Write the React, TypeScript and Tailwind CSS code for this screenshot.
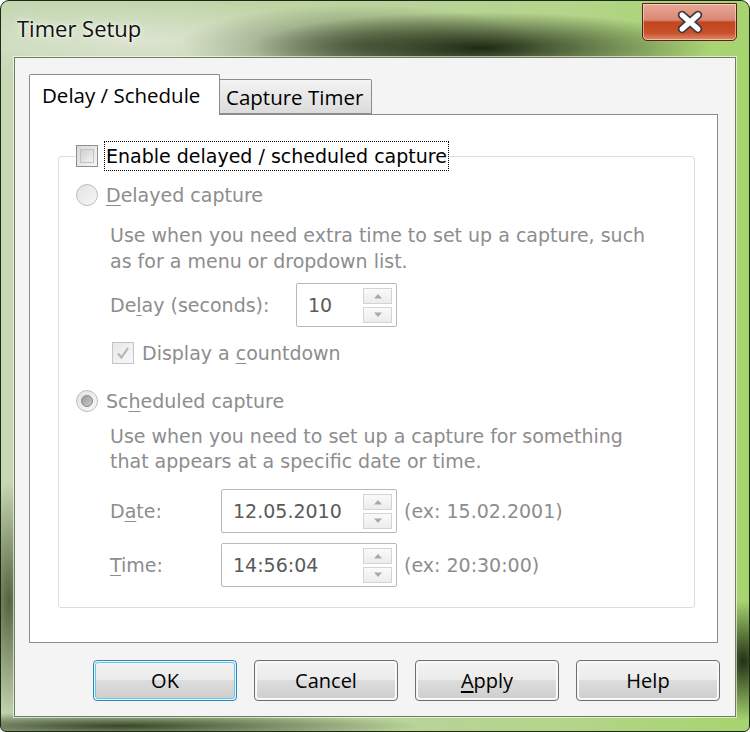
import React from "react";

const ui = "font-['DejaVu_Sans',sans-serif]";
const seg = "font-['Open_Sans',sans-serif]";

function SpinButtons() {
  return (
    <div className="flex flex-col gap-[3px] mr-[4px]">
      {[0, 1].map((i) => (
        <div
          key={i}
          className="w-[29px] h-[16px] border border-[#d4d4d4] bg-gradient-to-b from-[#fafafa] to-[#ececec] flex items-center justify-center"
        >
          <svg width="10" height="6" viewBox="0 0 10 6">
            {i === 0 ? (
              <path d="M1 5.5 L5 1 L9 5.5 Z" fill="#a9a9a9" />
            ) : (
              <path d="M1 0.5 L5 5 L9 0.5 Z" fill="#a9a9a9" />
            )}
          </svg>
        </div>
      ))}
    </div>
  );
}

function SpinBox({ value, width }: { value: string; width: string }) {
  return (
    <div
      className={`${width} h-[44px] border border-[#b8b8b8] rounded-[2px] bg-white flex items-center justify-between`}
    >
      <span className={`pl-[11px] text-[19px] text-[#5a5a5a] ${ui}`}>{value}</span>
      <SpinButtons />
    </div>
  );
}

function Radio({ checked }: { checked?: boolean }) {
  return (
    <div className="w-[22px] h-[22px] rounded-full border border-[#bdbdbd] bg-gradient-to-br from-[#e2e2e2] to-[#f8f8f8] flex items-center justify-center shrink-0">
      {checked && (
        <div className="w-[12px] h-[12px] rounded-full bg-gradient-to-br from-[#9a9a9a] to-[#c8c8c8] border border-[#8a8a8a]" />
      )}
    </div>
  );
}

function Btn({ label, def, u }: { label: string; def?: boolean; u?: boolean }) {
  return (
    <div
      className={`w-[144px] h-[41px] rounded-[4px] border ${
        def ? "border-[#3c7fb1]" : "border-[#707070]"
      } p-[1px]`}
    >
      <div
        className={`w-full h-full rounded-[3px] border ${
          def ? "border-[#4fd0f8]" : "border-[#fbfbfb]"
        } bg-[linear-gradient(180deg,#f2f2f2_0%,#ebebeb_49%,#dddddd_50%,#cfcfcf_100%)] flex items-center justify-center text-[20px] text-black ${seg}`}
      >
        {u ? (
          <span>
            <span className="underline underline-offset-[3px]">{label[0]}</span>
            {label.slice(1)}
          </span>
        ) : (
          label
        )}
      </div>
    </div>
  );
}

function U({ children }: { children: React.ReactNode }) {
  return <span className="underline underline-offset-[3px] decoration-1">{children}</span>;
}

export default function App() {
  return (
    <div className="w-[750px] h-[732px] relative overflow-hidden bg-white">
      <div className="w-[750px] h-[732px] rounded-t-[9px] rounded-b-[6px] border border-[#1d2816] bg-[radial-gradient(ellipse_230px_36px_at_480px_47px,rgba(24,34,14,0.95),rgba(24,34,14,0)),radial-gradient(ellipse_180px_40px_at_360px_44px,rgba(60,70,45,0.6),rgba(60,70,45,0)),radial-gradient(ellipse_240px_40px_at_140px_40px,rgba(225,230,215,0.85),rgba(225,230,215,0)),radial-gradient(ellipse_40px_60px_at_742px_660px,rgba(20,30,10,0.9),rgba(20,30,10,0)),radial-gradient(ellipse_300px_14px_at_120px_725px,rgba(40,55,25,0.9),rgba(40,55,25,0)),radial-gradient(ellipse_30px_120px_at_8px_600px,rgba(55,70,35,0.8),rgba(55,70,35,0)),linear-gradient(90deg,#c6d8b4_0%,#bcd3a0_45%,#b4d58a_75%,#a6d46e_100%)] flex flex-col">
        {/* title bar */}
        <div className="h-[56px] flex items-start justify-between shrink-0">
          <div
            className={`ml-[16px] mt-[11px] text-[22px] text-[#101010] ${seg} [text-shadow:0_0_8px_rgba(255,255,255,0.9),0_0_3px_rgba(255,255,255,0.9)]`}
          >
            Timer Setup
          </div>
          <div className="mr-[12px] mt-[2px] w-[95px] h-[38px] rounded-b-[5px] border border-[#5b2116] bg-[linear-gradient(180deg,#e9a998_0%,#d98672_45%,#c2451f_50%,#c8502a_80%,#e08a6a_100%)] flex items-center justify-center shadow-[inset_0_0_0_1px_rgba(255,255,255,0.45)]">
            <svg width="30" height="24" viewBox="0 0 30 24">
              <path d="M7 5 L23 19 M23 5 L7 19" stroke="#3b3b46" strokeWidth="8.5" strokeLinecap="round" />
              <path d="M7 5 L23 19 M23 5 L7 19" stroke="#ffffff" strokeWidth="5" strokeLinecap="round" />
            </svg>
          </div>
        </div>

        {/* client area */}
        <div className="mx-[13px] mb-[14px] flex-1 border border-[#6f7d60] shadow-[0_0_0_1px_rgba(255,255,255,0.6)] bg-[#f4f4f4] flex flex-col">
          <div className="pl-[14px] pr-[17px] pt-[16px]">
            {/* tabs */}
            <div className={`flex items-end h-[40px] ${seg}`}>
              <div className="relative z-10 w-[191px] h-[41px] -mb-px bg-white border border-b-0 border-[#898c95] rounded-t-[2px] flex items-center pl-[12px] text-[20.5px] text-black">
                Delay / Schedule
              </div>
              <div className="w-[152px] h-[35px] bg-gradient-to-b from-[#f3f3f3] to-[#dcdcdc] border border-l-0 border-[#898c95] rounded-tr-[2px] flex items-center pl-[6px] pt-[2px] text-[20.5px] text-black">
                Capture Timer
              </div>
            </div>
            {/* panel */}
            <div className="h-[529px] bg-white border border-[#898c95] pl-[28px] pr-[22px] pt-[26px]">
              <fieldset className="border border-[#d5dfe5] rounded-[3px] pl-[17px] h-[467px]">
                <legend className="flex items-center">
                  <div className="w-[22px] h-[22px] border border-[#8e8f8f] bg-gradient-to-br from-[#d8d8d8] to-[#f6f6f6] p-[3px]">
                    <div className="w-full h-full border border-[#c2c2c2] bg-gradient-to-br from-[#cfcfcf] to-[#f3f3f3]" />
                  </div>
                  <div
                    className={`ml-[6px] px-[1px] h-[30px] border border-dotted border-black flex items-center text-[19px] text-black ${ui}`}
                  >
                    Enable delayed / scheduled capture
                  </div>
                </legend>

                <div className={`${ui} text-[19px] text-[#8d8d8d]`}>
                  <div className="mt-[11px] h-[26px] flex items-center gap-[8px]">
                    <Radio />
                    <span>
                      <U>D</U>elayed capture
                    </span>
                  </div>
                  <div className="mt-[14px] ml-[34px] leading-[26px]">
                    Use when you need extra time to set up a capture, such
                    <br />
                    as for a menu or dropdown list.
                  </div>
                  <div className="mt-[9px] ml-[34px] flex items-center h-[44px]">
                    <span className="w-[186px]">
                      De<U>l</U>ay (seconds):
                    </span>
                    <SpinBox value="10" width="w-[101px]" />
                  </div>
                  <div className="mt-[13px] ml-[36px] h-[26px] flex items-center gap-[8px]">
                    <div className="w-[22px] h-[22px] border border-[#c4c4c4] bg-gradient-to-br from-[#e8e8e8] to-[#f8f8f8] flex items-center justify-center">
                      <svg width="16" height="16" viewBox="0 0 16 16">
                        <path d="M3 8.5 L6.5 12.5 L13 3" stroke="#b5b5b5" strokeWidth="2.2" fill="none" />
                      </svg>
                    </div>
                    <span>
                      Display a <U>c</U>ountdown
                    </span>
                  </div>
                  <div className="mt-[22px] h-[26px] flex items-center gap-[8px]">
                    <Radio checked />
                    <span>
                      Sc<U>h</U>eduled capture
                    </span>
                  </div>
                  <div className="mt-[10px] ml-[34px] leading-[25px]">
                    Use when you need to set up a capture for something
                    <br />
                    that appears at a specific date or time.
                  </div>
                  <div className="mt-[15px] ml-[34px] flex items-center h-[44px]">
                    <span className="w-[111px]">
                      D<U>a</U>te:
                    </span>
                    <SpinBox value="12.05.2010" width="w-[176px]" />
                    <span className="ml-[7px]">(ex: 15.02.2001)</span>
                  </div>
                  <div className="mt-[10px] ml-[34px] flex items-center h-[44px]">
                    <span className="w-[111px]">
                      <U>T</U>ime:
                    </span>
                    <SpinBox value="14:56:04" width="w-[176px]" />
                    <span className="ml-[7px]">(ex: 20:30:00)</span>
                  </div>
                </div>
              </fieldset>
            </div>
          </div>
          {/* buttons */}
          <div className="flex justify-end gap-[17px] pr-[15px] mt-[17px]">
            <Btn label="OK" def />
            <Btn label="Cancel" />
            <Btn label="Apply" u />
            <Btn label="Help" />
          </div>
        </div>
      </div>
    </div>
  );
}
